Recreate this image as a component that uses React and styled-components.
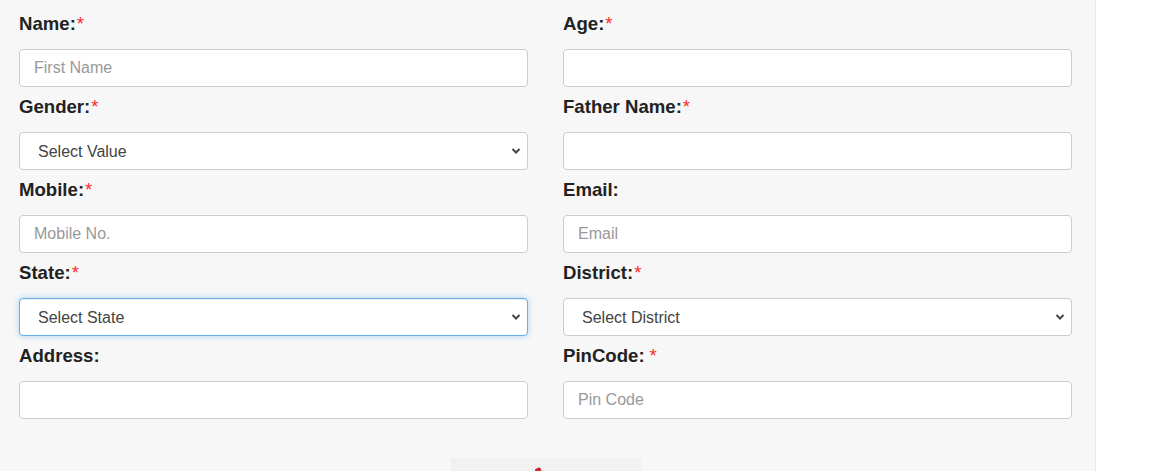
import React from "react";
import styled, { createGlobalStyle } from "styled-components";

const GlobalStyle = createGlobalStyle`
  html, body {
    margin: 0;
    padding: 0;
    background: #ffffff;
    font-family: "Liberation Sans", Arial, sans-serif;
  }
  * { box-sizing: border-box; }
`;

const Page = styled.div`
  display: flex;
  height: 471px;
  overflow: hidden;
`;

const Panel = styled.div`
  width: 1096px;
  background: #f7f7f7;
  border-right: 1px solid #e7e7e7;
  padding: 8px 23px 0 19px;
`;

const Grid = styled.div`
  display: grid;
  grid-template-columns: 509px 509px;
  column-gap: 35px;
`;

const Field = styled.div`
  display: flex;
  flex-direction: column;
  margin-bottom: 4px;
`;

const Label = styled.label`
  font-size: 18.6px;
  font-weight: bold;
  line-height: 27px;
  color: #222222;
  padding-top: 2px;
  margin-bottom: 12px;
`;

const Star = styled.span`
  color: #ff2a2a;
  font-weight: normal;
  margin-left: ${(p) => (p.$spaced ? "5px" : "1px")};
`;

const Input = styled.input`
  height: 38px;
  width: 100%;
  border: 1px solid #cccccc;
  border-radius: 4px;
  background: #ffffff;
  padding: 0 14px;
  font-family: "Liberation Sans", Arial, sans-serif;
  font-size: 16px;
  color: #555555;
  outline: none;
  &::placeholder {
    color: #999999;
  }
`;

const SelectWrap = styled.div`
  position: relative;
  height: 38px;
`;

const Select = styled.select`
  appearance: none;
  -webkit-appearance: none;
  height: 38px;
  width: 100%;
  border: 1px solid ${(p) => (p.$focused ? "#66afe9" : "#cccccc")};
  border-radius: 4px;
  background: #ffffff;
  padding: 0 30px 0 18px;
  font-family: "Liberation Sans", Arial, sans-serif;
  font-size: 16px;
  color: #444444;
  outline: none;
  box-shadow: ${(p) =>
    p.$focused
      ? "inset 0 1px 1px rgba(0,0,0,.075), 0 0 6px rgba(102,175,233,.55)"
      : "none"};
`;

const Chevron = styled.svg`
  position: absolute;
  right: 7px;
  top: 15px;
  width: 10px;
  height: 8px;
  pointer-events: none;
`;

const Footer = styled.div`
  display: flex;
  justify-content: center;
  margin-top: 35px;
  padding-left: 1px;
`;

const Captcha = styled.div`
  position: relative;
  width: 190px;
  height: 40px;
  background: #f1f1f1;
`;

const CaptchaMark = styled.span`
  position: absolute;
  left: 84px;
  top: 10px;
  width: 6px;
  height: 4px;
  background: #d4202f;
  border-radius: 2px 2px 0 0;
  transform: rotate(-20deg);
`;

function Dropdown({ text, focused }) {
  return (
    <SelectWrap>
      <Select $focused={focused} defaultValue="">
        <option value="">{text}</option>
      </Select>
      <Chevron viewBox="0 0 10 8">
        <path d="M1.5 2 L5 5.5 L8.5 2" fill="none" stroke="#444" strokeWidth="2" />
      </Chevron>
    </SelectWrap>
  );
}

function FormField({ label, required, spaced, children }) {
  return (
    <Field>
      <Label>
        {label}
        {required && <Star $spaced={spaced}>*</Star>}
      </Label>
      {children}
    </Field>
  );
}

export default function App() {
  return (
    <Page>
      <GlobalStyle />
      <Panel>
        <Grid>
          <FormField label="Name:" required>
            <Input placeholder="First Name" />
          </FormField>
          <FormField label="Age:" required>
            <Input />
          </FormField>
          <FormField label="Gender:" required>
            <Dropdown text="Select Value" />
          </FormField>
          <FormField label="Father Name:" required>
            <Input />
          </FormField>
          <FormField label="Mobile:" required>
            <Input placeholder="Mobile No." />
          </FormField>
          <FormField label="Email:">
            <Input placeholder="Email" />
          </FormField>
          <FormField label="State:" required>
            <Dropdown text="Select State" focused />
          </FormField>
          <FormField label="District:" required>
            <Dropdown text="Select District" />
          </FormField>
          <FormField label="Address:">
            <Input />
          </FormField>
          <FormField label="PinCode:" required spaced>
            <Input placeholder="Pin Code" />
          </FormField>
        </Grid>
        <Footer>
          <Captcha>
            <CaptchaMark />
          </Captcha>
        </Footer>
      </Panel>
    </Page>
  );
}
